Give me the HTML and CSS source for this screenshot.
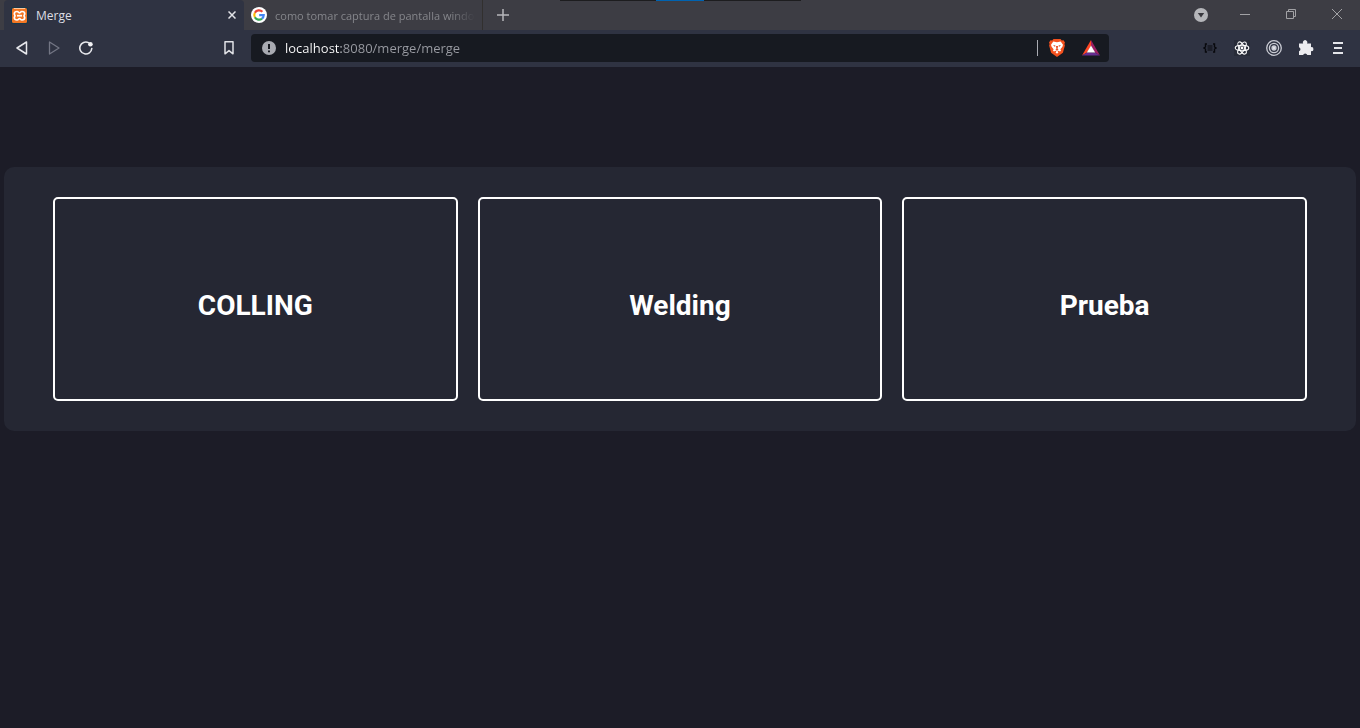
FILE: index.html
```html
<!DOCTYPE html>
<html lang="es">
<head>
<meta charset="utf-8">
<meta name="viewport" content="width=device-width, initial-scale=1">
<title>Merge</title>
<link rel="stylesheet" href="styles.css">
</head>
<body>
<header class="browser">
  <div class="progress" aria-hidden="true"><span class="progress-value"></span></div>
  <div class="tab-strip">
    <div class="tab tab-active">
      <svg class="favicon favicon-app" viewBox="0 0 17 17" aria-hidden="true">
        <rect width="17" height="17" rx="2" fill="#17384a"/>
        <rect x="1" y="1" width="15" height="15" rx="1.5" fill="#f37623"/>
        <path d="M3 1.500h11" stroke="#ffc79c"/>
        <path d="M6 4.500c1.500 0 1.800 1.500 2.500 1.500s1-1.500 2.500-1.500c1.700 0 2.700 1 2.700 2.300 0 1-.7 1.500-.7 2s.7 1 .7 2c0 1.300-1 2.200-2.700 2.200-1.500 0-1.800-1.500-2.500-1.500S7.500 13 6 13c-1.700 0-2.700-.9-2.700-2.200 0-1 .7-1.500.7-2s-.7-1-.7-2C3.300 5.500 4.300 4.500 6 4.500z" fill="#f37623" stroke="#fff" stroke-width="1.700"/>
        <path d="M6 8.700h5" stroke="#fff" stroke-width="1.800"/>
      </svg>
      <button class="tab-title" type="button">Merge</button>
      <button class="icon-button tab-close" type="button" aria-label="Cerrar pestaña">
        <svg width="8" height="8" viewBox="0 0 8 8"><path d="M.5.5l7 7M7.500.5l-7 7" stroke="#e3e4e8" stroke-width="1.500"/></svg>
      </button>
    </div>
    <div class="tab tab-idle">
      <svg class="favicon" viewBox="0 0 16 16" aria-hidden="true">
        <circle cx="8" cy="8" r="8" fill="#fff"/>
        <g fill="none" stroke-width="2.200">
          <path d="M11.400 4.800A4.700 4.700 0 0 0 3.900 5.700" stroke="#ea4335"/>
          <path d="M3.900 5.700a4.700 4.700 0 0 0 0 4.600" stroke="#fbbc05"/>
          <path d="M3.900 10.300a4.700 4.700 0 0 0 7.100 1.300" stroke="#34a853"/>
          <path d="M11 11.600A4.700 4.700 0 0 0 12.700 8.200H8.200" stroke="#4285f4"/>
        </g>
      </svg>
      <button class="tab-title" type="button">como tomar captura de pantalla windo</button>
    </div>
    <button class="icon-button new-tab" type="button" aria-label="Nueva pestaña">
      <svg width="12" height="12" viewBox="0 0 12 12"><path d="M6 0v12M0 6h12" stroke="#b6b6ba" stroke-width="1.500"/></svg>
    </button>
    <div class="window-controls">
      <button class="icon-button search-tabs" type="button" aria-label="Buscar pestañas">
        <svg width="14" height="14" viewBox="0 0 14 14"><circle cx="7" cy="7" r="7" fill="#b5b6ba"/><path d="M3.800 5h6.400L7 9.500z" fill="#38383e"/></svg>
      </button>
      <button class="icon-button window-button" type="button" aria-label="Minimizar">
        <svg width="10" height="10" viewBox="0 0 10 10"><path d="M0 5.500h10" stroke="#a2a2a5"/></svg>
      </button>
      <button class="icon-button window-button" type="button" aria-label="Restaurar">
        <svg width="10" height="10" viewBox="0 0 10 10" fill="none" stroke="#a2a2a5"><path d="M.5 2.500h7v7h-7zM2.500 2.500v-2h7v7h-2"/></svg>
      </button>
      <button class="icon-button window-button" type="button" aria-label="Cerrar">
        <svg width="10" height="10" viewBox="0 0 10 10"><path d="M0 0l10 10M10 0L0 10" stroke="#a2a2a5"/></svg>
      </button>
    </div>
  </div>
  <div class="toolbar">
    <nav class="history">
      <button class="icon-button tool" type="button" aria-label="Atrás">
        <svg width="12" height="14" viewBox="0 0 12 14"><path d="M10.500 1v12L1 7z" fill="none" stroke="#e7e8ec" stroke-width="1.500" stroke-linejoin="round"/></svg>
      </button>
      <button class="icon-button tool" type="button" aria-label="Adelante" disabled>
        <svg width="12" height="14" viewBox="0 0 12 14"><path d="M1.500 1v12L11 7z" fill="none" stroke="#737684" stroke-width="1.300" stroke-linejoin="round"/></svg>
      </button>
      <button class="icon-button tool" type="button" aria-label="Recargar">
        <svg width="14" height="14" viewBox="0 0 14 14"><path d="M12.800 7.500A6 6 0 1 1 9.500 1.600" fill="none" stroke="#e7e8ec" stroke-width="1.600" stroke-linecap="round"/><circle cx="11.400" cy="3.200" r="2.300" fill="#f2f2f4"/></svg>
      </button>
    </nav>
    <button class="icon-button tool bookmark" type="button" aria-label="Añadir marcador">
      <svg width="10" height="14" viewBox="0 0 10 14"><path d="M1 .8h8v12L5 9.600 1 12.800z" fill="none" stroke="#e1e2e6" stroke-width="1.500" stroke-linejoin="round"/></svg>
    </button>
    <div class="address-bar">
      <svg class="site-info" width="14" height="14" viewBox="0 0 14 14" aria-hidden="true"><circle cx="7" cy="7" r="7" fill="#a9abb2"/><path d="M7 3v5M7 9.500v1.800" stroke="#171a21" stroke-width="2"/></svg>
      <input class="address" type="text" aria-label="Dirección" value="localhost:8080/merge/merge" spellcheck="false">
      <span class="divider"></span>
      <button class="icon-button shield" type="button" aria-label="Brave Shields">
        <svg width="16" height="18" viewBox="0 0 16 18"><path d="M4.500 0h7l1.300 1.400 1.700-.2L16 3.600l-.6 1.400.5 1.600-2 7.200L8 18l-5.900-4.200-2-7.200L.6 5 0 3.600l1.500-2.400 1.700.2z" fill="#f4511e"/><path d="M4.300 2.600L8 3.200l3.700-.6 2.300 3.100-.6 2-2 2.500.6 1.500-1 .8-1.500-.8-1 .8 1 .8L8 14.800 6.500 13.300l1-.8-1-.8-1.500.8-1-.8.600-1.500-2-2.500-.6-2z" fill="#fff"/><path d="M4 6l2.500.5L6 8zM12 6l-2.500.5L10 8zM7 7h2l-.4 3 1 .8L8 11.800l-1.600-1 1-.8z" fill="#e94b20"/></svg>
      </button>
      <button class="icon-button rewards" type="button" aria-label="Brave Rewards">
        <svg width="18" height="16" viewBox="0 0 18 16"><path d="M9 0L0 15.500 5 12.500 9 6z" fill="#ff4724"/><path d="M9 0v6l4 6.500 5 3z" fill="#9e1f63"/><path d="M0 15.500h18l-5-3H5z" fill="#662d91"/><path d="M9 5.500L4.800 12.500h8.400z" fill="#fff"/></svg>
      </button>
    </div>
    <div class="extensions">
      <button class="icon-button tool" type="button" aria-label="JSON">
        <svg width="14" height="10" viewBox="0 0 14 10" fill="none" stroke="#08090d"><path d="M4 1H2.500v3L1 5l1.500 1v3H4M10 1h1.500v3L13 5l-1.500 1v3H10" stroke-width="1.400"/><path d="M4.500 3h5M4.500 5h5M4.500 7h5"/></svg>
      </button>
      <button class="icon-button tool" type="button" aria-label="React">
        <svg width="16" height="16" viewBox="0 0 16 16"><rect width="16" height="16" fill="#282c38"/><g fill="none" stroke="#fff" stroke-width="1.100"><ellipse cx="8" cy="8" rx="6.800" ry="2.700"/><ellipse cx="8" cy="8" rx="6.800" ry="2.700" transform="rotate(60 8 8)"/><ellipse cx="8" cy="8" rx="6.800" ry="2.700" transform="rotate(120 8 8)"/></g><circle cx="8" cy="8" r="1.400" fill="#fff"/></svg>
      </button>
      <button class="icon-button tool" type="button" aria-label="Extensión">
        <svg width="16" height="16" viewBox="0 0 16 16" fill="none" stroke="#c9cbd3" stroke-width="1.300"><circle cx="8" cy="8" r="7.300"/><circle cx="8" cy="8" r="4.600"/><circle cx="8" cy="8" r="2" fill="#dfe0e6"/></svg>
      </button>
      <button class="icon-button tool" type="button" aria-label="Extensiones">
        <svg width="16" height="16" viewBox="0 0 16 16"><path d="M1 3.500h4.200a2.200 2.200 0 1 1 3.800 0h4V7.200a2 2 0 1 1 0 3.900V15H9.300a2.200 2.200 0 0 0-4.200 0H1v-3.800a2.100 2.100 0 0 0 0-4z" fill="#ececef"/></svg>
      </button>
      <button class="icon-button tool" type="button" aria-label="Menú">
        <svg width="10" height="12" viewBox="0 0 10 12"><path d="M0 1h10M1 6h8M0 11h10" stroke="#e4e5e9" stroke-width="2"/></svg>
      </button>
    </div>
  </div>
</header>
<main class="page">
  <section class="panel">
    <a class="card" href="#colling">COLLING</a>
    <a class="card" href="#welding">Welding</a>
    <a class="card" href="#prueba">Prueba</a>
  </section>
</main>
</body>
</html>
```

FILE: styles.css
```css
* {
  box-sizing: border-box;
}

body {
  margin: 0;
  min-height: 100vh;
  background: #1c1c27;
  color: #fff;
  font-family: "Open Sans", "Noto Sans", sans-serif;
}

button,
input {
  margin: 0;
  padding: 0;
  border: 0;
  background: none;
  color: inherit;
  font: inherit;
}

svg {
  display: block;
  flex: none;
}

.icon-button {
  display: flex;
  flex: none;
  align-items: center;
  justify-content: center;
}

.browser {
  position: relative;
}

.progress {
  position: absolute;
  top: 0;
  left: 50%;
  width: 241px;
  height: 1px;
  margin-left: -120px;
  padding-left: 96px;
  background: #1d1d1f;
}

.progress-value {
  display: block;
  width: 48px;
  height: 1px;
  background: #0063b1;
}

.tab-strip {
  display: flex;
  height: 30px;
  padding-left: 4px;
  background: #3d3d44;
}

.tab {
  display: flex;
  align-items: center;
  width: 240px;
  font-size: 12px;
}

.tab-active {
  padding: 0 4px 0 7px;
  border-radius: 4px 4px 0 0;
  background: #2f3342;
  color: #dcdde3;
}

.tab-idle {
  width: 239px;
  padding: 0 7px;
  border-right: 1px solid #32302f;
  color: #85868b;
  font-size: 11px;
}

.favicon {
  width: 16px;
  height: 16px;
}

.favicon-app {
  width: 17px;
  height: 17px;
}

.tab-title {
  flex: 1;
  min-width: 0;
  margin-left: 8px;
  overflow: hidden;
  text-align: left;
  white-space: nowrap;
}

.tab-idle .tab-title {
  mask-image: linear-gradient(to left, transparent, #000 24px);
}

.tab-close {
  width: 16px;
  height: 16px;
}

.new-tab {
  width: 40px;
}

.window-controls {
  display: flex;
  margin-left: auto;
}

.search-tabs {
  width: 42px;
}

.window-button {
  width: 46px;
  padding-bottom: 2px;
}

.toolbar {
  display: flex;
  align-items: center;
  padding: 4px 6px 5px;
  background: #2f3342;
}

.history,
.extensions {
  display: flex;
}

.tool {
  width: 32px;
  height: 28px;
}

.bookmark {
  margin-left: 111px;
}

.address-bar {
  display: flex;
  flex: 1;
  align-items: center;
  height: 28px;
  margin: 0 85px 0 6px;
  padding: 0 9px 0 11px;
  border-radius: 4px;
  background: #171a21;
}

.address {
  flex: 1;
  min-width: 0;
  margin-left: 9px;
  background: linear-gradient(to right, #fff 56px, #9a9ca3 56px);
  background-clip: text;
  color: transparent;
  font-size: 13px;
}

.divider {
  width: 1px;
  height: 16px;
  margin-right: 11px;
  background: #a9abb2;
}

.shield {
  margin-right: 17px;
}

.page {
  padding: 100px 4px;
}

.panel {
  display: grid;
  grid-template-columns: repeat(3, 1fr);
  gap: 20px;
  padding: 30px 49px;
  border-radius: 10px;
  background: #252733;
}

.card {
  display: flex;
  align-items: center;
  justify-content: center;
  padding: 87px 16px 73px;
  border: 2px solid #fff;
  border-radius: 5px;
  color: #fff;
  font: 700 28px/40px Roboto, sans-serif;
  text-decoration: none;
}
```
